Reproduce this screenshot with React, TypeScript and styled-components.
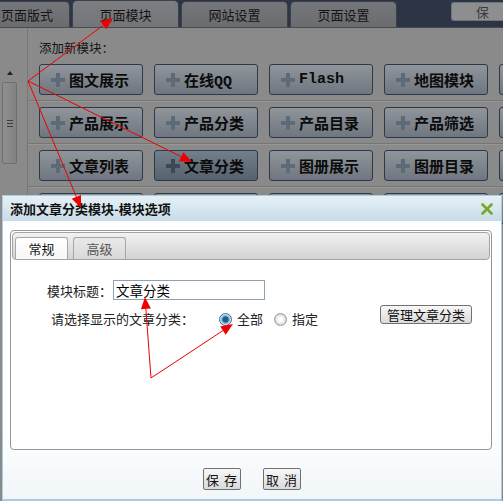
import React from 'react'
import styled, { createGlobalStyle } from 'styled-components'

const GlobalStyle = createGlobalStyle`
  html, body { margin: 0; padding: 0; }
  body {
    font-family: "Noto Sans CJK SC", "Noto Sans", sans-serif;
    font-size: 12px;
    color: #000;
  }
`

const cjk = '"Noto Sans CJK SC", "Noto Sans", sans-serif'

const Page = styled.div`
  position: relative;
  width: 503px;
  height: 501px;
  overflow: hidden;
  background: #8a8a8a;
  display: flex;
  flex-direction: column;
`

const TopBar = styled.div`
  height: 27px;
  flex-shrink: 0;
  background: #2c3546;
  display: flex;
  align-items: flex-end;
  gap: 2px;
  border-bottom: 1px solid #444b57;
`

const PageTab = styled.div<{ $active?: boolean; $first?: boolean }>`
  width: 107px;
  height: ${(p) => (p.$active ? 27 : 26)}px;
  flex-shrink: 0;
  box-sizing: border-box;
  margin-left: ${(p) => (p.$first ? -37 : 0)}px;
  padding-left: ${(p) => (p.$first ? 37 : 0)}px;
  border: 1px solid #3b404a;
  border-bottom: none;
  border-radius: 5px 5px 0 0;
  background: ${(p) =>
    p.$active ? 'linear-gradient(#7c7e81, #737578)' : 'linear-gradient(#74767a, #6a6c70)'};
  display: flex;
  align-items: center;
  justify-content: ${(p) => (p.$first ? 'flex-start' : 'center')};
  font-size: 13px;
  color: #141414;
`

const TopSave = styled.div`
  align-self: flex-start;
  margin: 2px 0 0 auto;
  width: 52px;
  height: 19px;
  box-sizing: border-box;
  border: 1px solid #6f7276;
  border-right: none;
  border-radius: 3px 0 0 3px;
  background: #8d8e90;
  color: #3a3a3a;
  font-size: 13px;
  line-height: 17px;
  padding-left: 24px;
`

const Body = styled.div`
  flex: 1;
  display: flex;
`

const LeftStrip = styled.div`
  width: 27px;
  flex-shrink: 0;
  border-right: 1px solid #777;
  padding-top: 37px;
`

const Scrollbar = styled.div`
  width: 15px;
  margin-left: 2px;
  display: flex;
  flex-direction: column;
  gap: 2px;
`

const ScrollUp = styled.div`
  height: 15px;
  display: flex;
  align-items: center;
  justify-content: center;
  &::before {
    content: '';
    border-left: 3px solid transparent;
    border-right: 3px solid transparent;
    border-bottom: 4px solid #222;
  }
`

const ScrollThumb = styled.div`
  height: 82px;
  box-sizing: border-box;
  border: 1px solid #6e6e6e;
  border-radius: 2px;
  background: linear-gradient(90deg, #8f8f8f, #828282);
  display: flex;
  flex-direction: column;
  align-items: center;
  justify-content: center;
  gap: 2px;
`

const Grip = styled.span`
  width: 6px;
  height: 1px;
  background: #3e3e3e;
`

const Content = styled.div`
  flex: 1;
  padding-top: 12px;
  min-width: 0;
`

const ModLabel = styled.div`
  padding-left: 11px;
  line-height: 16px;
  margin-bottom: 3px;
  font-size: 12.5px;
  color: #141414;
`

const ModRow = styled.div`
  display: flex;
  gap: 11px;
  padding: 5px 0 5px 11px;
  border-bottom: 1px solid #767676;
  box-shadow: 0 1px 0 #969696;
  margin-bottom: 1px;
`

const ModButton = styled.div<{ $hot?: boolean }>`
  width: 104px;
  height: 31px;
  flex-shrink: 0;
  box-sizing: border-box;
  border: 1px solid #2c3949;
  border-radius: 3px;
  background: ${(p) =>
    p.$hot ? 'linear-gradient(#737f8b, #56616d)' : 'linear-gradient(#90959b, #6f767f)'};
  display: flex;
  align-items: center;
  padding-left: 11px;
  gap: 4px;
  font-family: "Liberation Mono", ${cjk};
  font-weight: bold;
  font-size: 15px;
  color: #0b0b0b;
  white-space: nowrap;
`

const Plus = styled.span<{ $hot?: boolean }>`
  position: relative;
  width: 14px;
  height: 14px;
  flex-shrink: 0;
  &::before,
  &::after {
    content: '';
    position: absolute;
    background: ${(p) => (p.$hot ? '#3c4a58' : '#5d6b79')};
  }
  &::before { left: 5px; top: 0; width: 4px; height: 14px; }
  &::after { left: 0; top: 5px; width: 14px; height: 4px; }
`

const Dialog = styled.div`
  position: absolute;
  left: 2px;
  top: 195px;
  width: 500px;
  height: 306px;
  box-sizing: border-box;
  border: 1px solid #a8cde0;
  border-bottom: 2px solid #a8cde0;
  background: #fff;
  display: flex;
  flex-direction: column;
`

const DialogHeader = styled.div`
  height: 25px;
  flex-shrink: 0;
  background: linear-gradient(#e6f0f6, #c8dce8);
  display: flex;
  align-items: center;
  justify-content: space-between;
  padding: 0 8px 0 7px;
  font-size: 13px;
  font-weight: bold;
  color: #111;
`

const DialogBody = styled.div`
  flex: 1;
  display: flex;
  flex-direction: column;
  padding: 9px 9px 0 7px;
  background: linear-gradient(#fff 75%, #f1f6f9);
`

const Panel = styled.div`
  height: 220px;
  flex-shrink: 0;
  box-sizing: border-box;
  border: 1px solid #8c98a3;
  border-radius: 4px;
  padding: 1px;
  background: #fff;
`

const TabStrip = styled.div`
  height: 28px;
  box-sizing: border-box;
  border: 1px solid #a4a4a4;
  border-radius: 4px;
  background: linear-gradient(#f2f2f2, #d3d3d3);
  display: flex;
  align-items: flex-end;
  gap: 5px;
  padding-left: 2px;
`

const DlgTab = styled.div<{ $active?: boolean }>`
  width: 53px;
  height: 22px;
  box-sizing: border-box;
  border: 1px solid #a7a7a7;
  border-bottom: none;
  border-radius: 3px 3px 0 0;
  background: ${(p) => (p.$active ? 'linear-gradient(#fff, #f7f7f7)' : 'linear-gradient(#e9e9e9, #d9d9d9)')};
  display: flex;
  align-items: center;
  justify-content: center;
  font-size: 13px;
  color: ${(p) => (p.$active ? '#111' : '#555')};
`

const FieldRow = styled.div`
  display: flex;
  align-items: center;
  margin-top: 20px;
  padding-left: 35px;
`

const FieldLabel = styled.span`
  width: 66px;
  font-size: 13px;
  color: #222;
`

const TextInput = styled.div`
  width: 152px;
  height: 20px;
  box-sizing: border-box;
  border: 1px solid #8fa1b1;
  padding-left: 2px;
  font-size: 13.5px;
  line-height: 18px;
  color: #000;
`

const ChoiceRow = styled.div`
  display: flex;
  height: 22px;
  margin-top: 5px;
  padding-left: 39px;
`

const ChoiceLabel = styled.span`
  align-self: flex-end;
  width: 168px;
  font-size: 13px;
  line-height: 16px;
  color: #222;
`

const Option = styled.label`
  align-self: flex-end;
  display: flex;
  align-items: center;
  gap: 5px;
  margin-right: 11px;
  font-size: 13px;
  line-height: 16px;
  color: #222;
`

const Radio = styled.span<{ $on?: boolean }>`
  width: 13px;
  height: 13px;
  box-sizing: border-box;
  border-radius: 50%;
  border: 1px solid ${(p) => (p.$on ? '#3d6c8c' : '#9a9a9a')};
  background: ${(p) =>
    p.$on
      ? 'radial-gradient(circle, #1f5d8a 0 2.5px, #6aa7cf 3.5px, #e4eef5 5.5px)'
      : 'radial-gradient(circle, #fff 0 2px, #d6d6d6 5.5px)'};
`

const SmallButton = styled.div<{ $w: number }>`
  width: ${(p) => p.$w}px;
  height: 19px;
  box-sizing: border-box;
  border: 1px solid #707070;
  border-radius: 3px;
  background: linear-gradient(#f8f8f8, #dadada);
  display: flex;
  align-items: center;
  justify-content: center;
  font-size: 13px;
  color: #111;
  white-space: pre;
`

const ManageButton = styled(SmallButton)`
  margin-left: 51px;
`

const Footer = styled.div`
  display: flex;
  justify-content: center;
  gap: 22px;
  padding-top: 18px;
  padding-left: 2px;
`

const FooterButton = styled(SmallButton)`
  height: 22px;
  border-radius: 2px;
  letter-spacing: 1px;
`

const Overlay = styled.svg`
  position: absolute;
  left: 0;
  top: 0;
  pointer-events: none;
`

const CloseX = () => (
  <svg width="12" height="12" viewBox="0 0 12 12">
    <path d="M1.5 1.5 L10.5 10.5 M10.5 1.5 L1.5 10.5" stroke="#78a826" strokeWidth="2.6" strokeLinecap="round" />
  </svg>
)

const Arrow = ({ x1, y1, x2, y2 }: { x1: number; y1: number; x2: number; y2: number }) => {
  const a = Math.atan2(y2 - y1, x2 - x1)
  const len = 12
  const half = 5
  const bx = x2 - len * Math.cos(a)
  const by = y2 - len * Math.sin(a)
  const px = -Math.sin(a) * half
  const py = Math.cos(a) * half
  return (
    <g>
      <line x1={x1} y1={y1} x2={bx} y2={by} stroke="#e00" strokeWidth="1" />
      <polygon points={`${x2},${y2} ${bx + px},${by + py} ${bx - px},${by - py}`} fill="#e00" />
    </g>
  )
}

const rows = [
  ['图文展示', '在线QQ', 'Flash', '地图模块', ''],
  ['产品展示', '产品分类', '产品目录', '产品筛选', ''],
  ['文章列表', '文章分类', '图册展示', '图册目录', ''],
  ['', '', '', '', ''],
]

export default function App() {
  return (
    <>
      <GlobalStyle />
      <Page>
        <TopBar>
          <PageTab $first>页面版式</PageTab>
          <PageTab $active>页面模块</PageTab>
          <PageTab>网站设置</PageTab>
          <PageTab>页面设置</PageTab>
          <TopSave>保</TopSave>
        </TopBar>
        <Body>
          <LeftStrip>
            <Scrollbar>
              <ScrollUp />
              <ScrollThumb>
                <Grip />
                <Grip />
                <Grip />
              </ScrollThumb>
            </Scrollbar>
          </LeftStrip>
          <Content>
            <ModLabel>添加新模块：</ModLabel>
            {rows.map((row, i) => (
              <ModRow key={i}>
                {row.map((name, j) => {
                  const hot = i === 2 && j === 1
                  return (
                    <ModButton key={j} $hot={hot}>
                      {name && <Plus $hot={hot} />}
                      {name}
                    </ModButton>
                  )
                })}
              </ModRow>
            ))}
          </Content>
        </Body>

        <Dialog>
          <DialogHeader>
            <span>添加文章分类模块-模块选项</span>
            <CloseX />
          </DialogHeader>
          <DialogBody>
            <Panel>
              <TabStrip>
                <DlgTab $active>常规</DlgTab>
                <DlgTab>高级</DlgTab>
              </TabStrip>
              <FieldRow>
                <FieldLabel>模块标题：</FieldLabel>
                <TextInput>文章分类</TextInput>
              </FieldRow>
              <ChoiceRow>
                <ChoiceLabel>请选择显示的文章分类：</ChoiceLabel>
                <Option>
                  <Radio $on />
                  全部
                </Option>
                <Option>
                  <Radio />
                  指定
                </Option>
                <ManageButton $w={92}>管理文章分类</ManageButton>
              </ChoiceRow>
            </Panel>
            <Footer>
              <FooterButton $w={38}>保 存</FooterButton>
              <FooterButton $w={38}>取 消</FooterButton>
            </Footer>
          </DialogBody>
        </Dialog>

        <Overlay width="503" height="501" viewBox="0 0 503 501">
          <Arrow x1={28} y1={81} x2={113} y2={18} />
          <Arrow x1={28} y1={81} x2={192} y2={162} />
          <Arrow x1={28} y1={81} x2={81} y2={208} />
          <Arrow x1={151} y1={378} x2={145} y2={297} />
          <Arrow x1={151} y1={378} x2={233} y2={324} />
        </Overlay>
      </Page>
    </>
  )
}
